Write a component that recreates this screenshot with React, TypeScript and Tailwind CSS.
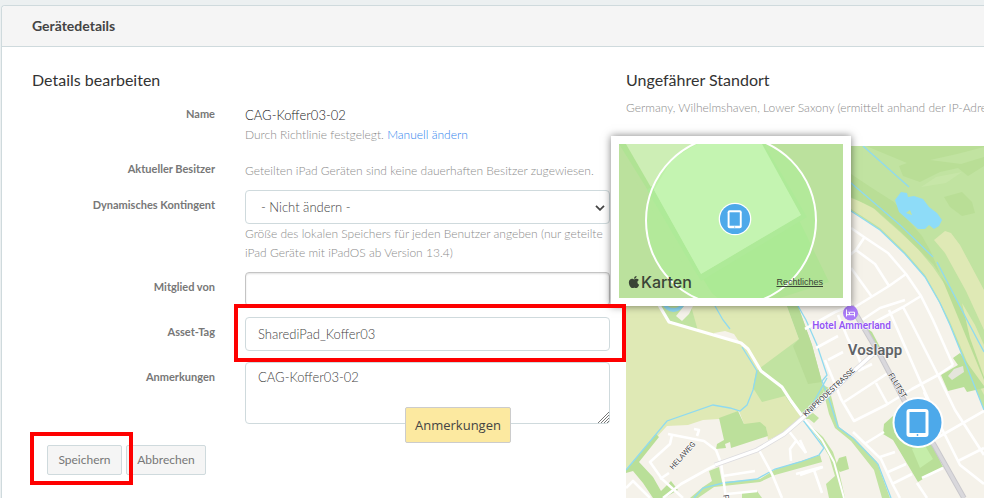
import { FaApple } from 'react-icons/fa';

type FieldProps = {
  label: string;
  htmlFor?: string;
  boxed?: boolean;
  className?: string;
  children: React.ReactNode;
};

const inputClass =
  'block w-full rounded border border-[#cfdadd] bg-white px-3 text-[13px] leading-5 font-light text-[#444444] outline-none';

const helpClass = 'text-[12px] leading-[19px] font-light text-[#8c8c8c]';

const Field: React.FC<FieldProps> = ({ label, htmlFor, boxed, className = '', children }) => (
  <div className={`flex gap-[30px] ${className}`}>
    <label
      htmlFor={htmlFor}
      className={`w-[183px] shrink-0 text-right text-[11px] leading-[18px] font-bold text-[#777777] ${boxed ? 'pt-[6px]' : ''}`}
    >
      {label}
    </label>
    <div className="relative min-w-0 flex-1">{children}</div>
  </div>
);

const Highlight: React.FC<{ className: string }> = ({ className }) => (
  <div className={`pointer-events-none absolute z-30 border-4 border-[#fe0000] ${className}`} />
);

const TabletMarker: React.FC<{ x: number; y: number; scale: number }> = ({ x, y, scale }) => (
  <g transform={`translate(${x} ${y}) scale(${scale})`}>
    <circle r="25.5" fill="#fff" />
    <circle r="23.5" fill="#4da9ea" />
    <rect x="-11.5" y="-13.5" width="22" height="28" rx="3" fill="#fff" />
    <rect x="-8.5" y="-10.5" width="16" height="21" fill="#4da9ea" />
    <circle cx="-0.5" cy="12.5" r="0.9" fill="#4da9ea" />
  </g>
);

const AreaMap = () => (
  <svg
    viewBox="626 146 358 352"
    preserveAspectRatio="xMinYMin slice"
    className="block h-[352px] w-full"
    role="img"
    aria-label="Karte"
  >
    <rect x="626" y="146" width="358" height="352" fill="#f5f2ea" />

    {/* fields */}
    <path
      d="M626 146H760L787 306L799 339L762 371L753 388L785 396L803 417L792 425L784 433L768 440L766 427L744 424L739 411L719 419L703 420L688 425L667 426L626 470Z"
      fill="#dfe9b5"
    />
    <path d="M714 333L725 331L734 334L740 343L715 336Z" fill="#f5f2ea" />

    {/* parks */}
    <path
      d="M770 146L787 306L799 339L756 371L753 388L762 402L785 396L792 406L803 417L824 399L822 382L812 345L798 306L782 264V146Z"
      fill="#c1e3a1"
    />
    <path d="M787 306L799 339L793 346L808 384L822 382L812 345L798 306Z" fill="#b8dc96" />
    <path d="M660 306H691L698 331L670 322Z" fill="#c1e3a1" />
    <path d="M676 316L682 321L689 314L693 306H684Z" fill="#f5f2ea" />
    <path d="M664 303A10 10 0 0 0 683 303" fill="none" stroke="#8fdaf5" strokeWidth="4" />
    <path
      d="M719 418L738 411L744 424L760 422L766 427L768 436L731 448L730 442L725 444L726 448L716 449L717 444L724 440Z"
      fill="#bce09b"
    />
    <path
      d="M626 470L656 434L659 437L639 462L653 477L661 491L671 481L678 490L664 498H653L643 483L633 471L626 473Z"
      fill="#b9df98"
    />
    <path
      d="M709 471L719 467L722 482L760 479L776 469L820 455L822 462L775 475L760 482L714 487L698 498H690L703 487L712 481Z"
      fill="#c1e3a1"
    />
    <path d="M742 492L757 491L762 498H742Z" fill="#c1e3a1" />
    <path
      d="M821 384L829 388L839 427L855 439L877 462L890 498H882L874 470L851 441L835 428L829 414L823 390Z"
      fill="#c1e3a1"
    />
    <path d="M803 419L813 413L819 418L814 423L809 419Z" fill="#c1e3a1" />
    <path
      d="M804 420L823 437L833 452L838 467L845 498H829L826 484L835 476L829 456L818 438Z"
      fill="#c1e3a1"
    />
    <path d="M839 458L846 456L849 469L840 472L835 467Z" fill="#bce09b" />
    <path d="M868 329L872 332L881 349L876 345L869 336Z" fill="#b9df98" />
    <path d="M893 416L884 424L883 434L893 440L918 482L943 467L930 440L918 446Z" fill="#b9df98" />
    <path d="M912 449L924 444L933 459L920 468Z" fill="#c5eda9" />

    {/* green belt in the north east */}
    <path d="M840 146H984V410L967 367L950 325L938 300L925 277L905 254L880 230L840 203Z" fill="#c1e3a1" />
    <path
      d="M851 198L870 205L883 217L900 232L918 249L933 267L950 292L969 325L984 355V395L967 362L950 322L938 298L925 275L905 252L880 228L851 209Z"
      fill="#dfe9b5"
    />
    <path
      d="M851 174L872 188L894 202L908 220L922 236L931 252L984 380V355L964 315L950 289L933 264L900 231L875 209L851 197Z"
      fill="#b9de96"
    />
    <path d="M866 146H984V166L968 176L958 168L940 172L920 182L903 176L899 166L907 163Z" fill="#b9de96" />
    <path d="M944 197L962 192L972 202L975 213L962 216L950 207Z" fill="#b9de96" />
    <path d="M921 187L946 183L962 172L936 177Z" fill="#c7e6a8" />
    <path d="M930 160L957 154L984 147V157L961 164Z" fill="#c1e3a1" />
    <path d="M934 240L945 231L951 233L960 245L984 290V330L966 291L945 253Z" fill="#dfe9b5" />
    <path d="M962 303L975 325L984 345V377L970 338Z" fill="#dfe9b5" />
    <path
      d="M895 200L901 192L907 193L908 197L914 196L923 199L929 207L937 213L942 220L939 226L934 229L929 225L925 229H918L908 220L899 212Z"
      fill="#8edcf8"
    />
    <path d="M906 213L910 210L912 215Z" fill="#c1e3a1" />

    {/* park beside the coast road */}
    <path d="M941 375L958 365L953 358L960 353L984 386V388L967 392L964 387L948 391Z" fill="#b9df98" />
    <path d="M948 376L954 369L963 366L964 372L952 380Z" fill="#e5e5dc" />

    {/* canals */}
    <g fill="none" stroke="#8fdaf0" strokeWidth="1.3">
      <path d="M863 146L909 187" />
      <path d="M840 174L851 183L900 225L933 257" />
      <path d="M937 262L967 320L984 352" />
      <path d="M840 204L851 211L880 230L905 254L925 277L940 303L950 325L967 367L984 410" />
      <path d="M626 470L667 421L713 405L730 408L740 411L747 405L753 390L757 371L742 347" />
      <path d="M715 306L723 320L730 329" />
      <path d="M798 306L806 320L817 345L827 375L822 381L829 399L838 427L853 438L878 464L891 498" />
      <path d="M827 378L806 416" />
      <path d="M694 498L703 488L723 483L757 479L775 469L800 462L819 455L824 448L803 420" />
      <path d="M782 260L798 306" />
    </g>

    {/* small streets */}
    <g fill="none" stroke="#ffffff" strokeWidth="2.6" strokeLinejoin="round">
      <path d="M656 300L669 322L741 343L748 349L761 371L782 387L791 401L805 420" strokeWidth="3.2" />
      <path d="M805 420L822 440L834 462L844 498" strokeWidth="2" />
      <path d="M668 434L704 441L716 450L721 463L726 498" />
      <path d="M697 436L699 430L694 429" />
      <path d="M672 435L670 444L650 462L662 479L683 498" />
      <path d="M660 479L669 473" />
      <path d="M663 498L681 484L708 469L720 463" />
      <path d="M626 488L633 481L650 498" />
      <path d="M723 476L755 471" />
      <path d="M759 450L772 474L782 498" />
      <path d="M727 494L757 491" />
      <path d="M788 430L806 453M796 441L790 449L791 461" />
      <path d="M796 474L822 467M814 470L822 493" />
      <path d="M851 228L864 237L888 253L906 274L921 296L933 320L953 365" />
      <path d="M864 238L856 250L840 263" />
      <path d="M856 250L875 264L889 286M889 286L906 274M851 268L872 297M889 286L855 307" />
      <path d="M921 296L903 307L875 322M903 307L911 322L938 375" />
      <path d="M889 310L910 358L925 392L940 425L960 465L984 484" />
      <path d="M862 320L880 308L905 300" />
      <path d="M953 365L938 375L912 389L886 405L854 421L841 399L835 384" />
      <path d="M844 402L888 373M876 383L888 405" />
      <path d="M835 384L825 360M838 315L848 339L858 356L863 370M816 348L838 336M828 360L843 352" />
      <path d="M805 329L835 312L850 306M858 371L872 364" />
      <path d="M938 375L955 410L984 455M930 442L984 411M924 392L941 430" />
      <path d="M853 432L881 459L893 485L900 498M866 443L884 432M880 457L895 452M888 472L906 464M892 484L912 474M917 483L927 498" />
      <path d="M943 468L922 478M958 461L984 448" />
      <path d="M800 440L806 453M800 475L823 467" />
    </g>

    {/* main streets */}
    <path
      d="M715 465L757 450L784 434L805 416L855 370L873 354"
      fill="none"
      stroke="#dddcdf"
      strokeWidth="5"
    />
    <path
      d="M715 465L757 450L784 434L805 416L855 370L873 354"
      fill="none"
      stroke="#ffffff"
      strokeWidth="3.4"
    />
    <path d="M851 306L880 355L905 402L934 445L964 498" fill="none" stroke="#c9c8cc" strokeWidth="5.5" />
    <path d="M851 306L880 355L905 402L934 445L964 498" fill="none" stroke="#d9d8dc" strokeWidth="3.5" />

    {/* labels */}
    <g fontFamily="Roboto, sans-serif" fill="#3c3c3c" stroke="#fff" strokeWidth="1" paintOrder="stroke">
      <text transform="translate(806 417) rotate(-43)" fontSize="7.5">KNIPRODESTRASSE</text>
      <text transform="translate(673 470) rotate(-48)" fontSize="7.5">HELAWEG</text>
      <text transform="translate(888 375) rotate(59)" fontSize="8">FLUTST</text>
      <text transform="translate(723 495) rotate(83)" fontSize="8">P</text>
      <text x="851.5" y="329" textAnchor="middle" fontSize="10" fontWeight="600" fill="#9456f3">
        Hotel Ammerland
      </text>
      <text x="875" y="355" textAnchor="middle" fontSize="15" fontWeight="600" fill="#5f6366">
        Voslapp
      </text>
    </g>
    <circle cx="850.5" cy="313" r="7.5" fill="#ab7cf8" />
    <path
      d="M846.5 309.5V316.5M846.5 314.7H854.5M854.5 316.5V312.2H849.5V314.7M847.8 312.2H848.8"
      fill="none"
      stroke="#fff"
      strokeWidth="1"
    />
    <TabletMarker x={918} y={422.5} scale={1} />
  </svg>
);

const DetailMap = () => (
  <div className="absolute -top-[10px] -left-[15px] z-10 h-[170px] w-[240px] bg-white p-2 shadow-[0_0_8px_rgba(0,0,0,0.5)]">
    <svg viewBox="619 144 224 154" className="block h-full w-full" role="img" aria-label="Standort">
      <rect x="619" y="144" width="224" height="154" fill="#bbe19d" />
      <path d="M619 144H626L703 274L799 220L829 282L780 298H715Z" fill="#b0e394" />
      <path d="M626 144H762L801 215L701 274Z" fill="#cdeeb5" />
      <path d="M619 152V298H718L690 276Z" fill="#bbe19d" />
      <circle cx="731" cy="220.5" r="85" fill="#a8f497" fillOpacity="0.4" />
      <path d="M764 144L807 217L701 281L647 190L652 186L701 274L801 215L761 144Z" fill="#aeea98" />
      <path d="M654 190L672 159L697 144H762L801 215L701 274Z" fill="#c4f4b1" />
      <circle cx="731" cy="220.5" r="85" fill="none" stroke="#fff" strokeWidth="2" />
      <TabletMarker x={735} y={219} scale={0.64} />
    </svg>
    <div className="absolute inset-x-4 bottom-[14px] flex items-center justify-between text-[#3a4436]">
      <span className="flex items-center font-[Inter] text-[16px] leading-5 font-medium">
        <FaApple size={14} />
        Karten
      </span>
      <a href="#legal" className="mr-3 font-['Liberation_Sans'] text-[9px] leading-4 underline">
        Rechtliches
      </a>
    </div>
  </div>
);

const EditForm = () => (
  <form onSubmit={(e) => e.preventDefault()}>
    <h3 className="mb-[13px] text-[16px] leading-6 text-[#333333]">Details bearbeiten</h3>
    <div className="flex flex-col gap-[11px]">
      <Field label="Name" className="min-h-11">
        <p className="text-[13px] leading-5 font-light text-[#222222]">CAG-Koffer03-02</p>
        <p className={helpClass}>
          Durch Richtlinie festgelegt.{' '}
          <a href="#name" className="text-[#2f84ee]">
            Manuell ändern
          </a>
        </p>
      </Field>
      <Field label="Aktueller Besitzer" className="h-[19px]">
        <p className={`${helpClass} pt-px`}>Geteilten iPad Geräten sind keine dauerhaften Besitzer zugewiesen.</p>
      </Field>
      <Field label="Dynamisches Kontingent" htmlFor="quota" boxed className="-mb-px">
        <select id="quota" className={`${inputClass} h-[34px] appearance-none pl-[15px]`}>
          <option>- Nicht ändern -</option>
        </select>
        <svg
          viewBox="0 0 10 6"
          className="pointer-events-none absolute top-[15px] right-[5px] h-[6px] w-[10px]"
          fill="none"
          stroke="#444"
          strokeWidth="1.8"
        >
          <path d="M1 0.8L5 4.8L9 0.8" />
        </svg>
        <p className={helpClass}>
          Größe des lokalen Speichers für jeden Benutzer angeben (nur geteilte iPad Geräte mit iPadOS ab Version 13.4)
        </p>
      </Field>
      <Field label="Mitglied von" htmlFor="groups" boxed>
        <input
          id="groups"
          type="text"
          className="block h-[34px] w-full rounded border border-[#c4c4c4] bg-white px-3 shadow-[inset_0_1px_2px_rgba(0,0,0,0.12)] outline-none"
        />
      </Field>
      <Field label="Asset-Tag" htmlFor="asset" boxed>
        <input id="asset" type="text" defaultValue="SharediPad_Koffer03" className={`${inputClass} h-[34px]`} />
        <Highlight className="-top-[13px] -right-4 -bottom-[11px] -left-[11px]" />
      </Field>
      <Field label="Anmerkungen" htmlFor="notes" boxed>
        <textarea
          id="notes"
          defaultValue="CAG-Koffer03-02"
          className={`${inputClass} h-[62px] resize-none pt-1`}
        />
        <svg
          viewBox="0 0 11 11"
          className="pointer-events-none absolute right-px bottom-px h-[11px] w-[11px]"
          stroke="#777"
          strokeWidth="1"
        >
          <path d="M0 11L11 0M3 11L11 3M6 11L11 6M9 11L11 9" />
        </svg>
        <div
          role="tooltip"
          className="absolute top-[45px] left-[160px] z-20 rounded-xs border border-[#cccccc] bg-[#fce9a0] px-[9px] py-2 font-['Open_Sans'] text-[13px] leading-[18px] font-medium text-[#444444]"
        >
          Anmerkungen
        </div>
      </Field>
    </div>
    <div className="mt-[21px] flex gap-1 pl-[15px] text-[12px] leading-[18px] text-[#777777]">
      <div className="relative">
        <button type="submit" className="h-[30px] w-[75px] rounded-xs border border-[#cfdadd] bg-[#f5f5f5]">
          Speichern
        </button>
        <Highlight className="-top-[13px] -right-[11px] -bottom-[10px] -left-[17px]" />
      </div>
      <button type="button" className="h-[30px] w-20 rounded-xs border border-[#cfdadd] bg-[#f5f5f5]">
        Abbrechen
      </button>
    </div>
  </form>
);

const App = () => (
  <div className="min-h-screen overflow-hidden bg-[#ecf0f1] pt-[5px] pl-px font-[Lato,sans-serif]">
    <section className="min-h-[calc(100vh-5px)] rounded-tl border-t border-l border-[#cfdadd] bg-white">
      <h2 className="rounded-tl border-b border-[#cfdadd] bg-[#f5f5f5] px-[30px] py-[10px] text-[14px] leading-5 font-bold text-[#444444]">
        Gerätedetails
      </h2>
      <div className="grid grid-cols-[minmax(0,578fr)_minmax(0,358fr)] gap-4 pt-[21px] pl-[30px]">
        <EditForm />
        <div className="min-w-0">
          <h3 className="text-[16px] leading-6 text-[#333333]">Ungefährer Standort</h3>
          <p className={`${helpClass} mt-[6px] mb-[29px] whitespace-nowrap`}>
            Germany, Wilhelmshaven, Lower Saxony (ermittelt anhand der IP-Adresse)
          </p>
          <div className="relative">
            <AreaMap />
            <DetailMap />
          </div>
        </div>
      </div>
    </section>
  </div>
);

export default App;
